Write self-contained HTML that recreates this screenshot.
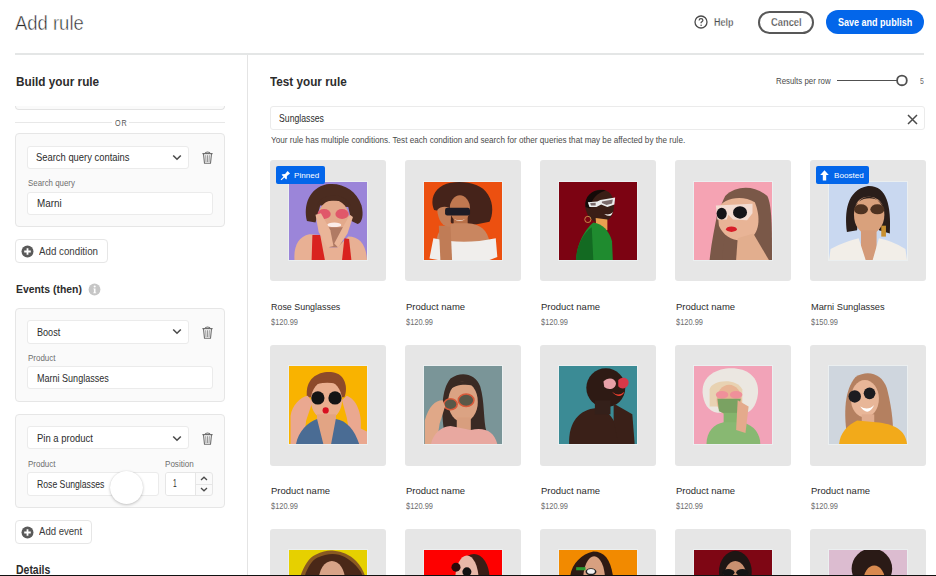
<!DOCTYPE html>
<html><head><meta charset="utf-8">
<style>
html,body{margin:0;padding:0;width:936px;height:576px;overflow:hidden;background:#fff;}
body{position:relative;font-family:"Liberation Sans", sans-serif;}
.a{position:absolute;box-sizing:border-box;}
.t{position:absolute;white-space:pre;transform-origin:0 0;font-family:"Liberation Sans", sans-serif;}
.card{position:absolute;box-sizing:border-box;background:#fafafa;border:1px solid #e6e6e6;border-radius:4px;}
.inp{position:absolute;box-sizing:border-box;background:#fff;border:1px solid #ebebeb;border-radius:3px;}
.pc{position:absolute;background:#e6e6e6;border-radius:3px;overflow:hidden;}
.ph{position:absolute;overflow:hidden;}
.ph svg{display:block;width:100%;height:100%;}
.badge{position:absolute;background:#0366ea;border-radius:2px;}
</style></head><body>
<div class="a" style="left:15px;top:53px;width:909px;height:2px;background:#e4e6e6"></div>
<svg class="a" style="left:694px;top:15px" width="14" height="14" viewBox="0 0 14 14"><circle cx="7" cy="7" r="6" fill="none" stroke="#4b4b4b" stroke-width="1.3"/><path d="M5.1 5.4 C5.1 4.2 6 3.6 7 3.6 C8.1 3.6 8.9 4.3 8.9 5.3 C8.9 6.4 7.5 6.7 7.1 7.5 L7.1 8.3" fill="none" stroke="#4b4b4b" stroke-width="1.2"/><circle cx="7.1" cy="10.2" r="0.75" fill="#4b4b4b"/></svg>
<div class="a" style="left:758px;top:10.5px;width:56px;height:23px;border:2px solid #585858;border-radius:12px"></div>
<div class="a" style="left:826px;top:10px;width:98px;height:24px;background:#0366ea;border-radius:12px"></div>
<div class="a" style="left:247px;top:55px;width:1px;height:521px;background:#e4e4e4"></div>
<div class="a" style="left:15px;top:100px;width:210px;height:10px;background:#fafafa;border:1px solid #e3e3e3;border-top:none;border-radius:0 0 4px 4px;clip-path:inset(6px 0 0 0)"></div>
<div class="a" style="left:15px;top:122px;width:97px;height:1px;background:#e8e8e8"></div>
<div class="a" style="left:129px;top:122px;width:96px;height:1px;background:#e8e8e8"></div>
<div class="card" style="left:15px;top:133px;width:210px;height:94px;"></div>
<div class="inp" style="left:27px;top:146px;width:162px;height:23px;"></div>
<svg class="a" style="left:172px;top:153.5px" width="10" height="7" viewBox="0 0 10 7"><path d="M1.2 1.5 L5 5.2 L8.8 1.5" fill="none" stroke="#4b4b4b" stroke-width="1.6"/></svg>
<svg class="a" style="left:201.8px;top:151px" width="11" height="13" viewBox="0 0 11 13"><path d="M3.2 2.4 C3.2 0.6 7.8 0.6 7.8 2.4" fill="none" stroke="#6e6e6e" stroke-width="1.1"/><path d="M0.4 2.6 L10.6 2.6" stroke="#6e6e6e" stroke-width="1.2"/><path d="M1.5 3 L2.5 12.3 L8.5 12.3 L9.5 3" fill="none" stroke="#6e6e6e" stroke-width="1.1"/><path d="M3.7 4.2 L4 11 M5.5 4.2 L5.5 11 M7.3 4.2 L7 11" stroke="#777" stroke-width="0.75"/></svg>
<div class="inp" style="left:27px;top:192px;width:186px;height:23px;"></div>
<div class="a" style="left:15px;top:239px;width:93px;height:24px;background:#fff;border:1px solid #e6e6e6;border-radius:4px"></div><svg class="a" style="left:20.5px;top:244.5px" width="13" height="13" viewBox="0 0 13 13"><circle cx="6.5" cy="6.5" r="6" fill="#5a5a5a"/><path d="M6.5 3.2 L6.5 9.8 M3.2 6.5 L9.8 6.5" stroke="#fff" stroke-width="1.8"/></svg>
<svg class="a" style="left:88px;top:283px" width="13" height="13" viewBox="0 0 13 13"><circle cx="6.5" cy="6.5" r="5.9" fill="#c6c6c6"/><circle cx="6.7" cy="3.5" r="1.05" fill="#fff"/><path d="M5.4 5.4 L7.5 5.4 L7.5 9.4 L8.2 9.4 L8.2 10.3 L5.2 10.3 L5.2 9.4 L5.9 9.4 L5.9 6.3 L5.4 6.3Z" fill="#fff"/></svg>
<div class="card" style="left:15px;top:308px;width:210px;height:94px;"></div>
<div class="inp" style="left:27px;top:320px;width:162px;height:24px;"></div>
<svg class="a" style="left:172px;top:328px" width="10" height="7" viewBox="0 0 10 7"><path d="M1.2 1.5 L5 5.2 L8.8 1.5" fill="none" stroke="#4b4b4b" stroke-width="1.6"/></svg>
<svg class="a" style="left:201.8px;top:325.5px" width="11" height="13" viewBox="0 0 11 13"><path d="M3.2 2.4 C3.2 0.6 7.8 0.6 7.8 2.4" fill="none" stroke="#6e6e6e" stroke-width="1.1"/><path d="M0.4 2.6 L10.6 2.6" stroke="#6e6e6e" stroke-width="1.2"/><path d="M1.5 3 L2.5 12.3 L8.5 12.3 L9.5 3" fill="none" stroke="#6e6e6e" stroke-width="1.1"/><path d="M3.7 4.2 L4 11 M5.5 4.2 L5.5 11 M7.3 4.2 L7 11" stroke="#777" stroke-width="0.75"/></svg>
<div class="inp" style="left:27px;top:366px;width:186px;height:23px;"></div>
<div class="card" style="left:15px;top:414px;width:210px;height:94px;"></div>
<div class="inp" style="left:27px;top:426px;width:162px;height:23px;"></div>
<svg class="a" style="left:172px;top:434.5px" width="10" height="7" viewBox="0 0 10 7"><path d="M1.2 1.5 L5 5.2 L8.8 1.5" fill="none" stroke="#4b4b4b" stroke-width="1.6"/></svg>
<svg class="a" style="left:201.8px;top:431.5px" width="11" height="13" viewBox="0 0 11 13"><path d="M3.2 2.4 C3.2 0.6 7.8 0.6 7.8 2.4" fill="none" stroke="#6e6e6e" stroke-width="1.1"/><path d="M0.4 2.6 L10.6 2.6" stroke="#6e6e6e" stroke-width="1.2"/><path d="M1.5 3 L2.5 12.3 L8.5 12.3 L9.5 3" fill="none" stroke="#6e6e6e" stroke-width="1.1"/><path d="M3.7 4.2 L4 11 M5.5 4.2 L5.5 11 M7.3 4.2 L7 11" stroke="#777" stroke-width="0.75"/></svg>
<div class="inp" style="left:27px;top:472px;width:132px;height:24px;"></div>
<div class="a" style="left:165px;top:472px;width:48px;height:24px;background:#fafafa;border:1px solid #e6e6e6;border-radius:3px"></div>
<div class="a" style="left:166px;top:473px;width:29px;height:22px;background:#fff;border-radius:2px 0 0 2px"></div>
<div class="a" style="left:195px;top:473px;width:1px;height:22px;background:#e6e6e6"></div>
<div class="a" style="left:196px;top:484px;width:16px;height:1px;background:#e6e6e6"></div>
<svg class="a" style="left:200px;top:476px" width="8" height="5" viewBox="0 0 8 5"><path d="M1 4 L4 1.2 L7 4" fill="none" stroke="#4b4b4b" stroke-width="1.3"/></svg>
<svg class="a" style="left:200px;top:487px" width="8" height="5" viewBox="0 0 8 5"><path d="M1 1 L4 3.8 L7 1" fill="none" stroke="#4b4b4b" stroke-width="1.3"/></svg>
<div class="a" style="left:110px;top:470.5px;width:33px;height:33px;background:#fff;border-radius:50%;box-shadow:0 1px 3px rgba(0,0,0,0.22),0 0 1px rgba(0,0,0,0.12)"></div>
<div class="a" style="left:15px;top:520px;width:77px;height:24px;background:#fff;border:1px solid #e6e6e6;border-radius:4px"></div><svg class="a" style="left:20.5px;top:525.5px" width="13" height="13" viewBox="0 0 13 13"><circle cx="6.5" cy="6.5" r="6" fill="#5a5a5a"/><path d="M6.5 3.2 L6.5 9.8 M3.2 6.5 L9.8 6.5" stroke="#fff" stroke-width="1.8"/></svg>
<div class="inp" style="left:270px;top:106px;width:655px;height:24px;"></div>
<svg class="a" style="left:906.5px;top:113.5px" width="11" height="11" viewBox="0 0 11 11"><path d="M1 1 L10 10 M10 1 L1 10" stroke="#4b4b4b" stroke-width="1.5"/></svg>
<div class="a" style="left:837px;top:79.6px;width:60px;height:1.8px;background:#505050"></div>
<svg class="a" style="left:894px;top:73px" width="16" height="16" viewBox="0 0 16 16"><circle cx="7.95" cy="7.4" r="4.85" fill="#fff" stroke="#505050" stroke-width="1.8"/></svg>
<div class="pc" style="left:270px;top:160px;width:116px;height:121px;"></div>
<div class="ph" style="left:289px;top:182px;width:78px;height:78px;box-shadow:0 0 0 1px rgba(240,248,250,0.5)"><svg viewBox="0 0 100 100" preserveAspectRatio="none"><rect width="100" height="100" fill="#9b85d9"/>
<path d="M23 50 C18 30 26 8 48 3 C68 0 86 10 93 30 C96 42 94 52 88 54 L80 50 L76 32 L40 30 L34 52 Z" fill="#4b2c20"/>
<ellipse cx="57" cy="46" rx="20" ry="23" fill="#e3a98b"/>
<path d="M36 30 C40 14 72 12 79 30 C70 22 46 22 36 30Z" fill="#4b2c20"/>
<ellipse cx="45" cy="41" rx="8.5" ry="6.5" fill="#e0586a"/><ellipse cx="68" cy="41" rx="8.5" ry="6.5" fill="#e0586a"/>
<ellipse cx="58" cy="55" rx="9" ry="3" fill="#fbecea"/>
<path d="M44 58 L70 58 L68 84 L48 84Z" fill="#b07a64"/><path d="M7 100 C6 82 12 70 26 67 L40 68 L52 84 L62 84 L76 70 C90 70 99 80 100 100Z" fill="#e8b094"/>
<path d="M30 68 L40 68 L46 100 L29 100Z" fill="#d9231f"/><path d="M71 72 L77 73 L80 100 L68 100Z" fill="#d9231f"/>
<path d="M34 42 L41 40 L53 62 L57 82 L49 84 L38 64Z" fill="#eab598"/>
<path d="M78 42 L82 45 L75 66 L63 84 L58 79 L68 60Z" fill="#eab598"/></svg></div>
<div class="pc" style="left:405px;top:160px;width:116px;height:121px;"></div>
<div class="ph" style="left:424px;top:182px;width:78px;height:78px;box-shadow:0 0 0 1px rgba(240,248,250,0.5)"><svg viewBox="0 0 100 100" preserveAspectRatio="none"><rect width="100" height="100" fill="#ec5010"/>
<path d="M13 36 C6 20 16 4 34 1 C52 -2 74 2 82 16 C90 28 88 44 84 51 L58 56 L36 54 L24 38 Z" fill="#45231a"/>
<rect x="38" y="42" width="18" height="16" fill="#b87048"/>
<ellipse cx="46" cy="34" rx="13" ry="17" fill="#c07850"/>
<path d="M16 78 C16 62 26 54 38 53 L56 53 C72 54 82 62 84 78 Z" fill="#c98660"/>
<path d="M7 98 L12 72 C40 78 62 78 92 72 L94 96 L84 100 L18 100Z" fill="#f0eeec"/>
<path d="M19 56 L34 56 L36 100 L21 100Z" fill="#c07c56"/>
<path d="M17 36 C22 30 32 31 35 36 L34 57 C26 59 18 51 17 36Z" fill="#c4805a"/>
<rect x="27" y="33" width="32" height="10" rx="3" fill="#1e1c26"/>
<path d="M38 47 Q46 51 53 47 Q46 53 38 47Z" fill="#f4e8e0"/></svg></div>
<div class="pc" style="left:540px;top:160px;width:116px;height:121px;"></div>
<div class="ph" style="left:559px;top:182px;width:78px;height:78px;box-shadow:0 0 0 1px rgba(240,248,250,0.5)"><svg viewBox="0 0 100 100" preserveAspectRatio="none"><rect width="100" height="100" fill="#7c0312"/>
<path d="M34 34 C32 18 44 9 56 10 C68 11 72 24 70 36 C68 46 62 52 54 52 C42 52 36 44 34 34Z" fill="#3a1e16"/>
<path d="M34 32 C32 16 46 8 60 11 C50 14 42 20 40 34Z" fill="#140a08"/>
<path d="M37 26 L49 25 L53 23 L72 20 L71 29 L62 32 L54 29 L48 32 L39 32Z" fill="#ececec"/>
<path d="M40 27 L47 26.5 L47 30 L41 30Z M55 25 L69 22.5 L68 27.5 L61 29.5 L55 27Z" fill="#7a6a6a"/>
<path d="M58 41 Q66 43 69 38 Q67 47 58 41Z" fill="#fff"/>
<circle cx="37" cy="48" r="4" fill="none" stroke="#c89048" stroke-width="1.2"/>
<path d="M47 46 L62 48 L62 62 L48 62Z" fill="#e8a050"/>
<path d="M22 100 C22 84 30 64 44 52 C56 54 64 62 68 76 L69 100Z" fill="#1f8b2f"/>
<path d="M22 100 C22 84 30 66 42 58 L44 100Z" fill="#136a22"/></svg></div>
<div class="pc" style="left:675px;top:160px;width:116px;height:121px;"></div>
<div class="ph" style="left:694px;top:182px;width:78px;height:78px;box-shadow:0 0 0 1px rgba(240,248,250,0.5)"><svg viewBox="0 0 100 100" preserveAspectRatio="none"><rect width="100" height="100" fill="#f5a3b3"/>
<path d="M31 100 C28 70 28 40 40 18 C54 4 78 4 94 18 C100 30 100 60 100 100Z" fill="#7a5848"/>
<path d="M20 100 C22 80 26 60 30 40 L40 60 L36 100Z" fill="#7a5848"/>
<path d="M30 36 C36 20 62 16 78 26 C86 46 84 66 70 74 C52 78 38 70 32 56Z" fill="#e8b496"/>
<path d="M56 72 L76 66 L96 100 L54 100Z" fill="#e2ae8e"/>
<path d="M28 30 L75 28 L75 40 L68 49 L50 48 L44 42 L42 48 L30 48Z" fill="#f3dcd2"/>
<ellipse cx="35.5" cy="40.5" rx="6.5" ry="7.5" fill="#141418"/><ellipse cx="59" cy="39" rx="9" ry="8" fill="#141418"/>
<ellipse cx="48" cy="60.5" rx="7" ry="3.5" fill="#d81e28"/></svg></div>
<div class="pc" style="left:810px;top:160px;width:116px;height:121px;"></div>
<div class="ph" style="left:829px;top:182px;width:78px;height:78px;box-shadow:0 0 0 1px rgba(240,248,250,0.5)"><svg viewBox="0 0 100 100" preserveAspectRatio="none"><rect width="100" height="100" fill="#c9d8f0"/>
<path d="M23 64 C20 40 22 10 50 5 C74 4 80 30 78 66 L64 62 L64 40 L38 40 L36 62Z" fill="#2a1e1a"/>
<path d="M32 42 C32 26 40 19 51 19 C62 19 71 26 71 42 C71 56 62 67 51 67 C40 67 32 56 32 42Z" fill="#d9a17c"/>
<path d="M31 38 C33 16 69 14 72 38 C66 24 58 19 51 19 C44 19 36 24 31 38Z" fill="#2a1e1a"/>
<ellipse cx="41" cy="35" rx="9" ry="6.5" fill="#4e3220"/><ellipse cx="62" cy="35" rx="9" ry="6.5" fill="#4e3220"/>
<rect x="41" y="62" width="20" height="38" fill="#d49a78"/>
<path d="M0 100 L2 86 C16 78 30 74 38 72 L47 100 L56 100 L64 72 C74 74 86 78 98 86 L100 100Z" fill="#f2eee8"/>
<rect x="67" y="56" width="6" height="14" fill="#c89030"/></svg></div>
<div class="pc" style="left:270px;top:344.5px;width:116px;height:121px;"></div>
<div class="ph" style="left:289px;top:366px;width:78px;height:78px;box-shadow:0 0 0 1px rgba(240,248,250,0.5)"><svg viewBox="0 0 100 100" preserveAspectRatio="none"><rect width="100" height="100" fill="#f9b300"/>
<path d="M23 40 C20 14 40 6 56 8 C72 10 76 28 71 40Z" fill="#8d4a2a"/>
<ellipse cx="48" cy="44" rx="20" ry="25" fill="#e9ae8e"/>
<path d="M28 26 C34 12 62 10 70 26 C60 20 38 20 28 26Z" fill="#8d4a2a"/>
<circle cx="37" cy="41" r="8.5" fill="#141414"/><circle cx="59" cy="41" r="8.5" fill="#141414"/>
<circle cx="47" cy="57" r="4" fill="#d81020"/>
<path d="M2 100 L2 64 C4 50 14 40 24 38 L30 46 L22 70 L18 100Z" fill="#eaa890"/>
<path d="M92 80 C94 60 86 42 74 38 L68 44 L74 66 L80 100 L100 100 L100 84Z" fill="#eaa890"/>
<path d="M36 62 L60 62 L62 100 L34 100Z" fill="#e2a484"/><path d="M9 100 C12 84 24 72 36 68 L44 100 L54 100 L60 68 C74 70 84 82 90 100Z" fill="#4a6c94"/></svg></div>
<div class="pc" style="left:405px;top:344.5px;width:116px;height:121px;"></div>
<div class="ph" style="left:424px;top:366px;width:78px;height:78px;box-shadow:0 0 0 1px rgba(240,248,250,0.5)"><svg viewBox="0 0 100 100" preserveAspectRatio="none"><rect width="100" height="100" fill="#7a9598"/>
<path d="M26 84 C22 60 22 30 34 16 C48 6 66 10 72 26 C78 46 76 70 80 84Z" fill="#3a2a24"/>
<ellipse cx="50" cy="46" rx="19" ry="26" fill="#dba383"/>
<path d="M31 32 C34 18 62 14 70 28 C60 22 40 22 31 32Z" fill="#3a2a24"/>
<rect x="42" y="66" width="18" height="16" fill="#d89e7e"/>
<ellipse cx="34" cy="49" rx="8.5" ry="7" fill="#5a5848" stroke="#d85a3a" stroke-width="2"/><ellipse cx="54" cy="44" rx="10" ry="8" fill="#5a5848" stroke="#d85a3a" stroke-width="2"/>
<path d="M1 100 L1 70 C6 52 14 44 24 44 L27 52 L20 74 L16 100Z" fill="#e0a888"/>
<path d="M9 100 C12 86 22 78 34 77 L60 82 C78 78 90 84 94 100Z" fill="#e8a8a0"/></svg></div>
<div class="pc" style="left:540px;top:344.5px;width:116px;height:121px;"></div>
<div class="ph" style="left:559px;top:366px;width:78px;height:78px;box-shadow:0 0 0 1px rgba(240,248,250,0.5)"><svg viewBox="0 0 100 100" preserveAspectRatio="none"><rect width="100" height="100" fill="#3b8b95"/>
<ellipse cx="60" cy="28" rx="25" ry="25" fill="#2e1a14"/>
<path d="M13 100 C12 72 26 56 48 54 C66 56 76 74 77 100Z" fill="#3a2018"/>
<rect x="46" y="44" width="20" height="18" fill="#34201a"/>
<path d="M57 20 C62 14 72 15 73 22 C73 29 64 32 58 27Z" fill="#e8a0a8"/><path d="M76 18 C82 12 91 16 89 23 C87 29 80 31 76 26Z" fill="#d83848"/>
<path d="M68 33 Q76 40 84 33 Q78 44 68 33Z" fill="#f04030"/>
<path d="M70 48 L94 62 L97 100 L76 100 L70 70Z" fill="#3a2018"/></svg></div>
<div class="pc" style="left:675px;top:344.5px;width:116px;height:121px;"></div>
<div class="ph" style="left:694px;top:366px;width:78px;height:78px;box-shadow:0 0 0 1px rgba(240,248,250,0.5)"><svg viewBox="0 0 100 100" preserveAspectRatio="none"><rect width="100" height="100" fill="#f2a3b8"/>
<path d="M11 34 C10 12 30 3 48 3 C68 3 84 14 82 36 C80 52 72 60 66 60 L30 60 C18 58 12 48 11 34Z" fill="#ebe7e1"/>
<path d="M20 30 C22 18 54 14 62 30 L62 52 L20 52Z" fill="#e8d2b2"/>
<ellipse cx="45" cy="44" rx="16" ry="20" fill="#e8b494"/>
<ellipse cx="36" cy="37" rx="8" ry="5" fill="#f0909a"/><ellipse cx="54" cy="37" rx="8" ry="5" fill="#f0909a"/>
<path d="M30 42 L60 42 L56 60 L46 64 L32 58Z" fill="#7aa262"/>
<rect x="38" y="60" width="18" height="20" fill="#84b46c"/>
<path d="M16 100 C16 84 26 74 38 72 L62 72 C78 76 85 88 85 100Z" fill="#88b872"/>
<path d="M56 44 L70 52 L66 86 L54 82Z" fill="#e4aa8c"/></svg></div>
<div class="pc" style="left:810px;top:344.5px;width:116px;height:121px;"></div>
<div class="ph" style="left:829px;top:366px;width:78px;height:78px;box-shadow:0 0 0 1px rgba(240,248,250,0.5)"><svg viewBox="0 0 100 100" preserveAspectRatio="none"><rect width="100" height="100" fill="#cfd6de"/>
<path d="M24 95 C18 60 20 30 34 14 C50 4 68 10 74 28 C80 50 84 80 81 95Z" fill="#b48060"/>
<ellipse cx="46" cy="42" rx="18" ry="24" fill="#e8b698"/>
<circle cx="33" cy="39" r="8" fill="#1c1c20"/><circle cx="52" cy="35" r="7.5" fill="#1c1c20"/>
<path d="M40 52 Q50 58 58 50 Q50 66 40 52Z" fill="#fff"/>
<rect x="42" y="62" width="16" height="16" fill="#e0ac8e"/>
<path d="M13 100 C14 86 24 76 36 70 L60 72 C84 74 98 82 100 100Z" fill="#f2aa1a"/></svg></div>
<div class="pc" style="left:270px;top:529px;width:116px;height:121px;"></div>
<div class="ph" style="left:289px;top:550px;width:78px;height:78px;box-shadow:0 0 0 1px rgba(240,248,250,0.5)"><svg viewBox="0 0 100 100" preserveAspectRatio="none"><rect width="100" height="100" fill="#e6d000"/>
<path d="M10 60 C10 40 20 12 34 6 C44 1 52 0 58 1 C68 2 78 6 86 14 C96 24 102 40 100 60 L100 100 L10 100Z" fill="#8a5a22"/>
<path d="M16 60 C16 40 24 16 36 10 C46 5 56 4 64 6 C74 9 84 16 92 28 C97 38 98 50 96 60 L96 100 L16 100Z" fill="#4a2818"/>
<ellipse cx="55" cy="40" rx="17" ry="26" fill="#d8a488"/></svg></div>
<div class="pc" style="left:405px;top:529px;width:116px;height:121px;"></div>
<div class="ph" style="left:424px;top:550px;width:78px;height:78px;box-shadow:0 0 0 1px rgba(240,248,250,0.5)"><svg viewBox="0 0 100 100" preserveAspectRatio="none"><rect width="100" height="100" fill="#fe0000"/>
<ellipse cx="64" cy="36" rx="20" ry="31" fill="#3a1e16"/>
<ellipse cx="55" cy="38" rx="15" ry="31" fill="#e8b8a8"/>
<circle cx="41" cy="22" r="5.8" fill="#2a0a0a"/><circle cx="55" cy="28" r="5.8" fill="#111"/></svg></div>
<div class="pc" style="left:540px;top:529px;width:116px;height:121px;"></div>
<div class="ph" style="left:559px;top:550px;width:78px;height:78px;box-shadow:0 0 0 1px rgba(240,248,250,0.5)"><svg viewBox="0 0 100 100" preserveAspectRatio="none"><rect width="100" height="100" fill="#f28a00"/>
<path d="M14 44 C12 22 26 6 44 2 C58 2 66 12 69 32 L72 64 L14 64Z" fill="#2e1a14"/>
<ellipse cx="45" cy="38" rx="14" ry="30" fill="#d8a080"/>
<path d="M22 22 L34 22 L34 26 L22 26Z" fill="#2a9a30"/><ellipse cx="41" cy="28" rx="7" ry="4.5" fill="#202020"/><ellipse cx="41" cy="27.5" rx="5" ry="3" fill="#f0f0f0"/></svg></div>
<div class="pc" style="left:675px;top:529px;width:116px;height:121px;"></div>
<div class="ph" style="left:694px;top:550px;width:78px;height:78px;box-shadow:0 0 0 1px rgba(240,248,250,0.5)"><svg viewBox="0 0 100 100" preserveAspectRatio="none"><rect width="100" height="100" fill="#7e0614"/>
<ellipse cx="53" cy="28" rx="21" ry="27" fill="#1e1614"/>
<ellipse cx="53" cy="42" rx="16" ry="28" fill="#c89070"/>
<ellipse cx="44" cy="29" rx="8" ry="4.5" fill="#141414"/><ellipse cx="62" cy="29" rx="8" ry="4.5" fill="#141414"/></svg></div>
<div class="pc" style="left:810px;top:529px;width:116px;height:121px;"></div>
<div class="ph" style="left:829px;top:550px;width:78px;height:78px;box-shadow:0 0 0 1px rgba(240,248,250,0.5)"><svg viewBox="0 0 100 100" preserveAspectRatio="none"><rect width="100" height="100" fill="#dcbcd0"/>
<ellipse cx="55" cy="24" rx="26" ry="26" fill="#2a1a16"/>
<ellipse cx="58" cy="40" rx="14" ry="20" fill="#d88a50"/></svg></div>
<div class="badge" style="left:276px;top:166px;width:49px;height:18px;"></div>
<svg class="a" style="left:279px;top:169.5px" width="12" height="12" viewBox="0 0 12 12"><g transform="rotate(45 6 6)"><path d="M4.3 0.6 L7.7 0.6 L7.3 4.6 L9.2 6.6 L9.2 7.6 L2.8 7.6 L2.8 6.6 L4.7 4.6Z" fill="#fff"/><path d="M6 7.4 L6 11.6" stroke="#fff" stroke-width="1.1"/></g></svg>
<div class="badge" style="left:816px;top:166px;width:53px;height:18px;"></div>
<svg class="a" style="left:820px;top:170px" width="9" height="11" viewBox="0 0 9 11"><path d="M4.5 0.3 L8.8 5 L6.2 5 L6.2 10.5 L2.8 10.5 L2.8 5 L0.2 5Z" fill="#fff"/></svg>
<div class="a" style="left:0px;top:574.5px;width:936px;height:1.5px;background:#111"></div>
<div class="t" style="-webkit-text-stroke:0.5px #fff;left:15.25px;top:13.19px;font-size:20.8px;line-height:20.8px;font-weight:400;color:#2c2c2c;letter-spacing:0px;transform:scaleX(0.8876)">Add rule</div>
<div class="t" style="-webkit-text-stroke:0.3px #fff;left:713.90px;top:16.83px;font-size:10.6px;line-height:10.6px;font-weight:700;color:#4b4b4b;letter-spacing:0px;transform:scaleX(0.8452)">Help</div>
<div class="t" style="-webkit-text-stroke:0.25px #fff;left:771.25px;top:16.79px;font-size:11px;line-height:11px;font-weight:700;color:#4b4b4b;letter-spacing:0px;transform:scaleX(0.8482)">Cancel</div>
<div class="t" style="left:837.80px;top:17.19px;font-size:11px;line-height:11px;font-weight:700;color:#ffffff;letter-spacing:0px;transform:scaleX(0.8199)">Save and publish</div>
<div class="t" style="left:15.50px;top:75.82px;font-size:12.5px;line-height:12.5px;font-weight:700;color:#2c2c2c;letter-spacing:0px;transform:scaleX(0.9428)">Build your rule</div>
<div class="t" style="left:114.70px;top:119.02px;font-size:8.6px;line-height:8.6px;font-weight:400;color:#555555;letter-spacing:1.2px;transform:scaleX(0.8319)">OR</div>
<div class="t" style="left:36.00px;top:151.76px;font-size:10.8px;line-height:10.8px;font-weight:400;color:#2c2c2c;letter-spacing:0px;transform:scaleX(0.8701)">Search query contains</div>
<div class="t" style="left:27.50px;top:179.18px;font-size:9px;line-height:9px;font-weight:400;color:#6e6e6e;letter-spacing:0px;transform:scaleX(0.8754)">Search query</div>
<div class="t" style="left:36.60px;top:197.56px;font-size:10.8px;line-height:10.8px;font-weight:400;color:#2c2c2c;letter-spacing:0px;transform:scaleX(0.9136)">Marni</div>
<div class="t" style="left:39.20px;top:246.39px;font-size:11px;line-height:11px;font-weight:400;color:#3a3a3a;letter-spacing:0px;transform:scaleX(0.8851)">Add condition</div>
<div class="t" style="left:15.70px;top:284.47px;font-size:11.5px;line-height:11.5px;font-weight:700;color:#2c2c2c;letter-spacing:0px;transform:scaleX(0.9040)">Events (then)</div>
<div class="t" style="left:36.75px;top:327.26px;font-size:10.8px;line-height:10.8px;font-weight:400;color:#2c2c2c;letter-spacing:0px;transform:scaleX(0.8421)">Boost</div>
<div class="t" style="left:27.60px;top:354.18px;font-size:9px;line-height:9px;font-weight:400;color:#6e6e6e;letter-spacing:0px;transform:scaleX(0.8853)">Product</div>
<div class="t" style="left:36.75px;top:372.66px;font-size:10.8px;line-height:10.8px;font-weight:400;color:#2c2c2c;letter-spacing:0px;transform:scaleX(0.8361)">Marni Sunglasses</div>
<div class="t" style="left:36.75px;top:433.16px;font-size:10.8px;line-height:10.8px;font-weight:400;color:#2c2c2c;letter-spacing:0px;transform:scaleX(0.8778)">Pin a product</div>
<div class="t" style="left:27.60px;top:459.88px;font-size:9px;line-height:9px;font-weight:400;color:#6e6e6e;letter-spacing:0px;transform:scaleX(0.8853)">Product</div>
<div class="t" style="left:36.75px;top:479.06px;font-size:10.8px;line-height:10.8px;font-weight:400;color:#2c2c2c;letter-spacing:0px;transform:scaleX(0.8018)">Rose Sunglasses</div>
<div class="t" style="left:165.30px;top:459.68px;font-size:9px;line-height:9px;font-weight:400;color:#6e6e6e;letter-spacing:0px;transform:scaleX(0.8965)">Position</div>
<div class="t" style="left:172.70px;top:477.76px;font-size:10.8px;line-height:10.8px;font-weight:400;color:#2c2c2c;letter-spacing:0px;transform:scaleX(0.6167)">1</div>
<div class="t" style="left:39.20px;top:525.69px;font-size:11px;line-height:11px;font-weight:400;color:#3a3a3a;letter-spacing:0px;transform:scaleX(0.8690)">Add event</div>
<div class="t" style="left:15.50px;top:564.44px;font-size:12px;line-height:12px;font-weight:700;color:#2c2c2c;letter-spacing:0px;transform:scaleX(0.8720)">Details</div>
<div class="t" style="left:270.30px;top:75.82px;font-size:12.5px;line-height:12.5px;font-weight:700;color:#2c2c2c;letter-spacing:0px;transform:scaleX(0.9379)">Test your rule</div>
<div class="t" style="left:279.20px;top:112.66px;font-size:10.8px;line-height:10.8px;font-weight:400;color:#2c2c2c;letter-spacing:0px;transform:scaleX(0.8047)">Sunglasses</div>
<div class="t" style="left:270.50px;top:136.08px;font-size:9px;line-height:9px;font-weight:400;color:#4b4b4b;letter-spacing:0px;transform:scaleX(0.9061)">Your rule has multiple conditions. Test each condition and search for other queries that may be affected by the rule.</div>
<div class="t" style="left:775.70px;top:76.98px;font-size:9px;line-height:9px;font-weight:400;color:#4b4b4b;letter-spacing:0px;transform:scaleX(0.8743)">Results per row</div>
<div class="t" style="left:920.20px;top:77.32px;font-size:8.6px;line-height:8.6px;font-weight:400;color:#6a6a6a;letter-spacing:0px;transform:scaleX(0.8000)">5</div>
<div class="t" style="left:294.40px;top:171.53px;font-size:8px;line-height:8px;font-weight:400;color:#ffffff;letter-spacing:0px;transform:scaleX(1.0098)">Pinned</div>
<div class="t" style="left:833.80px;top:171.53px;font-size:8px;line-height:8px;font-weight:400;color:#ffffff;letter-spacing:0px;transform:scaleX(1.0171)">Boosted</div>
<div class="t" style="left:270.60px;top:301.50px;font-size:9.8px;line-height:9.8px;font-weight:400;color:#2c2c2c;letter-spacing:0px;transform:scaleX(0.9091)">Rose Sunglasses</div>
<div class="t" style="left:270.60px;top:317.67px;font-size:8.3px;line-height:8.3px;font-weight:400;color:#6e6e6e;letter-spacing:0px;transform:scaleX(0.8987)">$120.99</div>
<div class="t" style="left:405.60px;top:301.50px;font-size:9.8px;line-height:9.8px;font-weight:400;color:#2c2c2c;letter-spacing:0px;transform:scaleX(0.9684)">Product name</div>
<div class="t" style="left:405.60px;top:317.67px;font-size:8.3px;line-height:8.3px;font-weight:400;color:#6e6e6e;letter-spacing:0px;transform:scaleX(0.8987)">$120.99</div>
<div class="t" style="left:540.60px;top:301.50px;font-size:9.8px;line-height:9.8px;font-weight:400;color:#2c2c2c;letter-spacing:0px;transform:scaleX(0.9684)">Product name</div>
<div class="t" style="left:540.60px;top:317.67px;font-size:8.3px;line-height:8.3px;font-weight:400;color:#6e6e6e;letter-spacing:0px;transform:scaleX(0.8987)">$120.99</div>
<div class="t" style="left:675.60px;top:301.50px;font-size:9.8px;line-height:9.8px;font-weight:400;color:#2c2c2c;letter-spacing:0px;transform:scaleX(0.9684)">Product name</div>
<div class="t" style="left:675.60px;top:317.67px;font-size:8.3px;line-height:8.3px;font-weight:400;color:#6e6e6e;letter-spacing:0px;transform:scaleX(0.8987)">$120.99</div>
<div class="t" style="left:810.60px;top:301.50px;font-size:9.8px;line-height:9.8px;font-weight:400;color:#2c2c2c;letter-spacing:0px;transform:scaleX(0.9452)">Marni Sunglasses</div>
<div class="t" style="left:810.60px;top:317.67px;font-size:8.3px;line-height:8.3px;font-weight:400;color:#6e6e6e;letter-spacing:0px;transform:scaleX(0.8987)">$150.99</div>
<div class="t" style="left:270.60px;top:485.90px;font-size:9.8px;line-height:9.8px;font-weight:400;color:#2c2c2c;letter-spacing:0px;transform:scaleX(0.9684)">Product name</div>
<div class="t" style="left:270.60px;top:502.07px;font-size:8.3px;line-height:8.3px;font-weight:400;color:#6e6e6e;letter-spacing:0px;transform:scaleX(0.8987)">$120.99</div>
<div class="t" style="left:405.60px;top:485.90px;font-size:9.8px;line-height:9.8px;font-weight:400;color:#2c2c2c;letter-spacing:0px;transform:scaleX(0.9684)">Product name</div>
<div class="t" style="left:405.60px;top:502.07px;font-size:8.3px;line-height:8.3px;font-weight:400;color:#6e6e6e;letter-spacing:0px;transform:scaleX(0.8987)">$120.99</div>
<div class="t" style="left:540.60px;top:485.90px;font-size:9.8px;line-height:9.8px;font-weight:400;color:#2c2c2c;letter-spacing:0px;transform:scaleX(0.9684)">Product name</div>
<div class="t" style="left:540.60px;top:502.07px;font-size:8.3px;line-height:8.3px;font-weight:400;color:#6e6e6e;letter-spacing:0px;transform:scaleX(0.8987)">$120.99</div>
<div class="t" style="left:675.60px;top:485.90px;font-size:9.8px;line-height:9.8px;font-weight:400;color:#2c2c2c;letter-spacing:0px;transform:scaleX(0.9684)">Product name</div>
<div class="t" style="left:675.60px;top:502.07px;font-size:8.3px;line-height:8.3px;font-weight:400;color:#6e6e6e;letter-spacing:0px;transform:scaleX(0.8987)">$120.99</div>
<div class="t" style="left:810.60px;top:485.90px;font-size:9.8px;line-height:9.8px;font-weight:400;color:#2c2c2c;letter-spacing:0px;transform:scaleX(0.9684)">Product name</div>
<div class="t" style="left:810.60px;top:502.07px;font-size:8.3px;line-height:8.3px;font-weight:400;color:#6e6e6e;letter-spacing:0px;transform:scaleX(0.8987)">$120.99</div>
</body></html>
